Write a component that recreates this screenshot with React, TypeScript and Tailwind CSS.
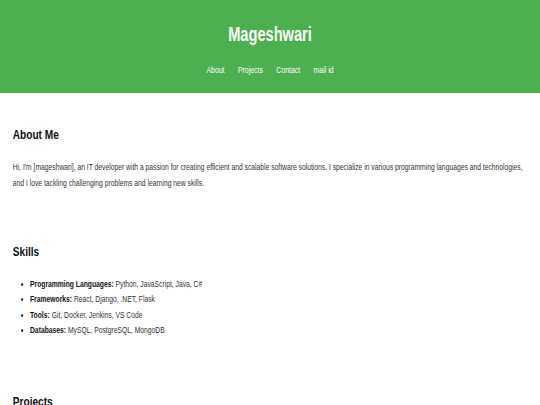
import React from "react";

const skills = [
  { label: "Programming Languages:", value: "Python, JavaScript, Java, C#" },
  { label: "Frameworks:", value: "React, Django, .NET, Flask" },
  { label: "Tools:", value: "Git, Docker, Jenkins, VS Code" },
  { label: "Databases:", value: "MySQL, PostgreSQL, MongoDB" },
];

// The page uses a narrow face; there is none installed, so the whole
// sheet is laid out at 720px and squeezed horizontally to 540px.
export default function App() {
  return (
    <div className="min-h-screen w-full overflow-hidden bg-white">
      <div className="w-[720px] origin-top-left scale-x-[0.75] text-[#333] font-['Liberation_Sans','Arial',sans-serif]">
        <header className="h-[93px] bg-[#4caf50] text-white flex flex-col items-center">
          <h1 className="mt-[22px] text-[19.5px] leading-[24px] font-bold">Mageshwari</h1>
          <nav className="mt-[18px] flex gap-[18px] text-[9.2px] leading-[12px]">
            <a href="#about">About</a>
            <a href="#projects">Projects</a>
            <a href="#contact">Contact</a>
            <a href="#mail">mail id</a>
          </nav>
        </header>

        <main className="px-[17px]">
          <section id="about" className="pt-[34px]">
            <h2 className="text-[13.5px] leading-[16px] font-bold text-[#111]">About Me</h2>
            <p className="mt-[16px] text-[9px] leading-[16px]">
              Hi, I'm [mageshwari], an IT developer with a passion for creating efficient and scalable software
              solutions. I specialize in various programming languages and technologies, and I love tackling
              challenging problems and learning new skills.
            </p>
          </section>

          <section className="pt-[53px]">
            <h2 className="text-[13.5px] leading-[16px] font-bold text-[#111]">Skills</h2>
            <ul className="mt-[17px] pl-[23px] list-disc text-[9px] leading-[15.3px]">
              {skills.map((s) => (
                <li key={s.label}>
                  <strong className="text-[#111]">{s.label}</strong> {s.value}
                </li>
              ))}
            </ul>
          </section>

          <section id="projects" className="pt-[56px]">
            <h2 className="text-[13.5px] leading-[16px] font-bold text-[#111]">Projects</h2>
          </section>
        </main>
      </div>
    </div>
  );
}
